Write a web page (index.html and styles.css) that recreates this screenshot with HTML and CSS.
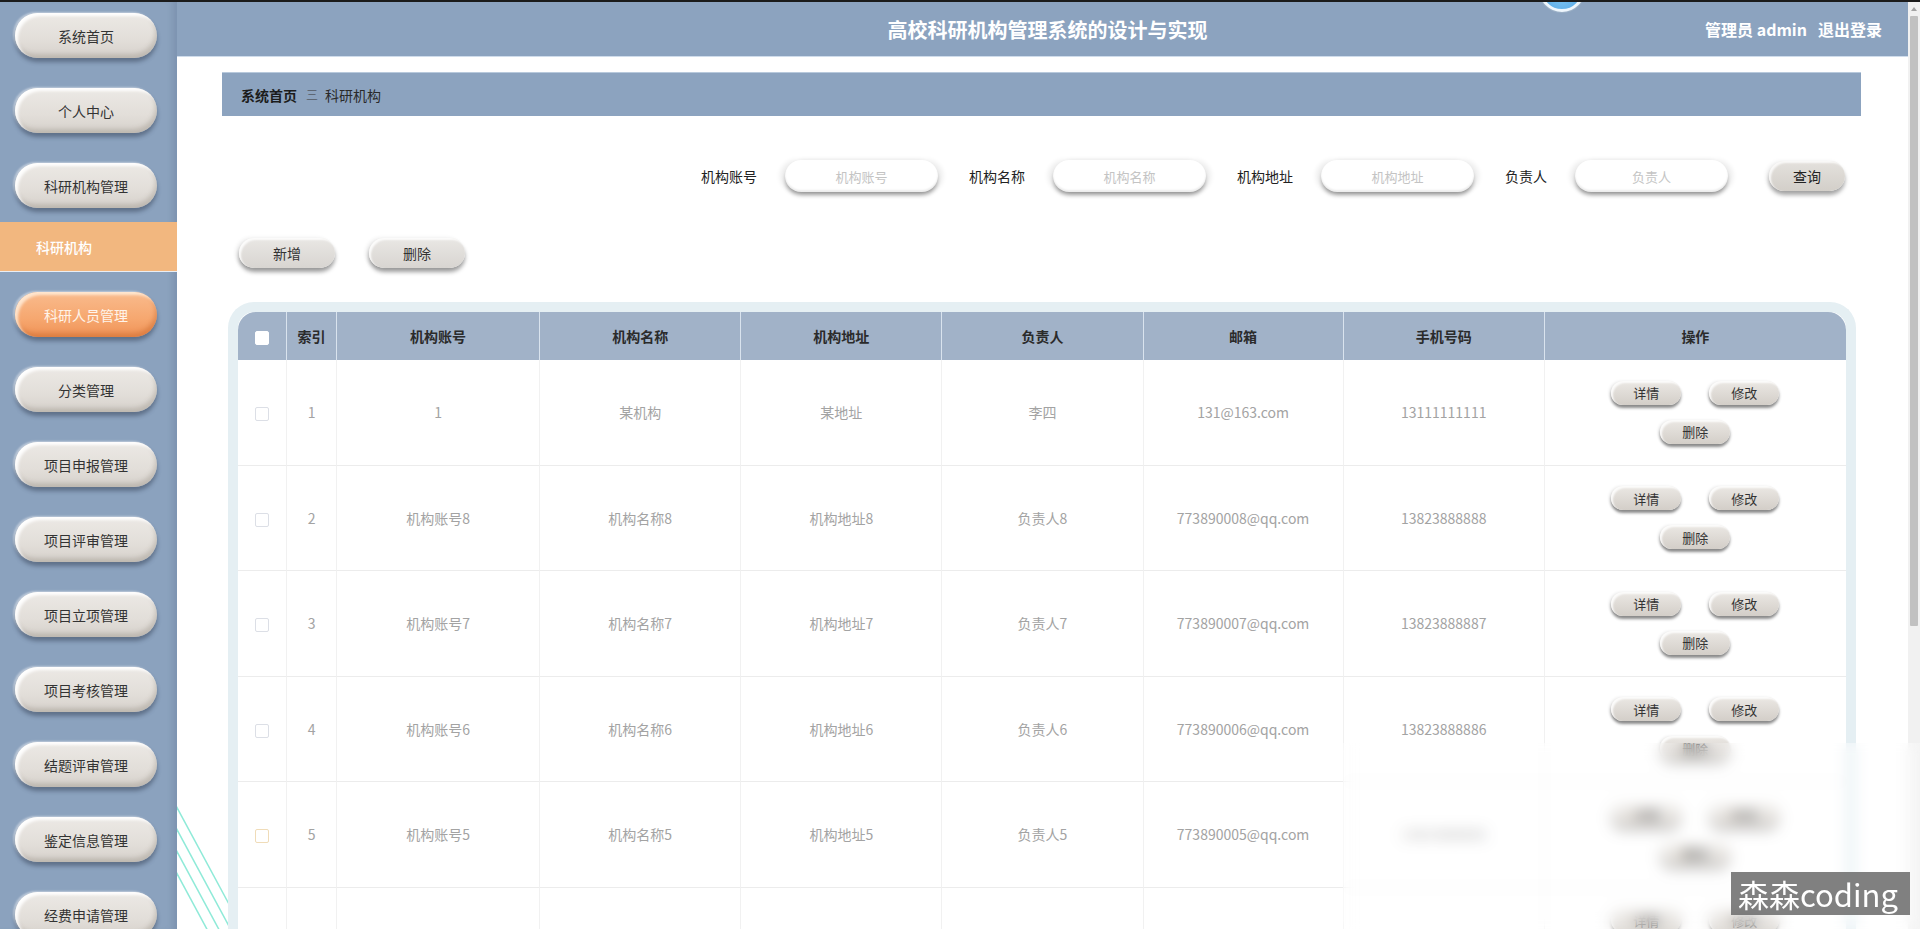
FILE: index.html
```html
<!DOCTYPE html>
<html lang="zh-CN">
<head>
<meta charset="utf-8">
<title>高校科研机构管理系统的设计与实现</title>
<link rel="stylesheet" href="styles.css">
</head>
<body>
<div class="app">
  <aside class="sidebar">
    <div class="nav-btn">系统首页</div>
    <div class="nav-btn">个人中心</div>
    <div class="nav-btn">科研机构管理</div>
    <div class="nav-sub">科研机构</div>
    <div class="nav-btn hover">科研人员管理</div>
    <div class="nav-btn">分类管理</div>
    <div class="nav-btn">项目申报管理</div>
    <div class="nav-btn">项目评审管理</div>
    <div class="nav-btn">项目立项管理</div>
    <div class="nav-btn">项目考核管理</div>
    <div class="nav-btn">结题评审管理</div>
    <div class="nav-btn">鉴定信息管理</div>
    <div class="nav-btn">经费申请管理</div>
  </aside>

  <div class="main">
    <header class="topbar">
      <div class="avatar"></div>
      <div class="tb-left"></div>
      <h1 class="title">高校科研机构管理系统的设计与实现</h1>
      <div class="user"><span>管理员 admin</span><span class="logout">退出登录</span></div>
    </header>

    <svg class="deco" width="60" height="180" viewBox="0 0 60 180">
      <line x1="-10" y1="40" x2="60" y2="170" />
      <line x1="-10" y1="62" x2="60" y2="192" />
      <line x1="-10" y1="84" x2="60" y2="214" />
      <line x1="-10" y1="106" x2="60" y2="236" />
    </svg>

    <div class="content">
      <div class="breadcrumb">
        <span class="bc-home">系统首页</span><span class="bc-sep">三</span><span class="bc-cur">科研机构</span>
      </div>

      <div class="search">
        <span class="s-label">机构账号</span><div class="s-input">机构账号</div>
        <span class="s-label">机构名称</span><div class="s-input">机构名称</div>
        <span class="s-label">机构地址</span><div class="s-input">机构地址</div>
        <span class="s-label">负责人</span><div class="s-input last">负责人</div>
        <div class="btn-query">查询</div>
      </div>

      <div class="actions">
        <div class="act-btn">新增</div>
        <div class="act-btn">删除</div>
      </div>

      <div class="table-box">
        <table class="grid">
          <colgroup>
            <col class="c-chk"><col class="c-idx"><col class="c-a"><col class="c-b"><col class="c-b"><col class="c-b"><col class="c-c"><col class="c-b"><col class="c-op">
          </colgroup>
          <thead>
            <tr>
              <th><span class="chk head"></span></th>
              <th>索引</th>
              <th>机构账号</th>
              <th>机构名称</th>
              <th>机构地址</th>
              <th>负责人</th>
              <th>邮箱</th>
              <th>手机号码</th>
              <th>操作</th>
            </tr>
          </thead>
          <tbody>
            <tr>
              <td><span class="chk"></span></td><td>1</td><td>1</td><td>某机构</td><td>某地址</td><td>李四</td><td>131@163.com</td><td>13111111111</td>
              <td><div class="ops"><span class="op">详情</span><span class="op">修改</span><span class="op">删除</span></div></td>
            </tr>
            <tr>
              <td><span class="chk"></span></td><td>2</td><td>机构账号8</td><td>机构名称8</td><td>机构地址8</td><td>负责人8</td><td>773890008@qq.com</td><td>13823888888</td>
              <td><div class="ops"><span class="op">详情</span><span class="op">修改</span><span class="op">删除</span></div></td>
            </tr>
            <tr>
              <td><span class="chk"></span></td><td>3</td><td>机构账号7</td><td>机构名称7</td><td>机构地址7</td><td>负责人7</td><td>773890007@qq.com</td><td>13823888887</td>
              <td><div class="ops"><span class="op">详情</span><span class="op">修改</span><span class="op">删除</span></div></td>
            </tr>
            <tr>
              <td><span class="chk"></span></td><td>4</td><td>机构账号6</td><td>机构名称6</td><td>机构地址6</td><td>负责人6</td><td>773890006@qq.com</td><td>13823888886</td>
              <td><div class="ops"><span class="op">详情</span><span class="op">修改</span><span class="op">删除</span></div></td>
            </tr>
            <tr>
              <td><span class="chk warm"></span></td><td>5</td><td>机构账号5</td><td>机构名称5</td><td>机构地址5</td><td>负责人5</td><td>773890005@qq.com</td><td>13823888885</td>
              <td><div class="ops"><span class="op">详情</span><span class="op">修改</span><span class="op">删除</span></div></td>
            </tr>
            <tr class="row-partial">
              <td><span class="chk"></span></td><td></td><td></td><td></td><td></td><td></td><td></td><td></td>
              <td><div class="ops"><span class="op">详情</span><span class="op">修改</span><span class="op">删除</span></div></td>
            </tr>
          </tbody>
        </table>
      </div>
    </div>
  </div>

  <div class="scrollbar">
    <div class="sb-arrow"></div>
    <div class="sb-thumb"></div>
  </div>
</div>

<div class="blur-patch"></div>
<div class="watermark">森森coding</div>
</body>
</html>
```

FILE: styles.css
```css
* { box-sizing: border-box; }

html, body {
  margin: 0;
  height: 100%;
  overflow: hidden;
}

body {
  font-family: "Noto Sans CJK SC", "Noto Sans", sans-serif;
  color: #333;
  background: #fff;
}

.app {
  display: flex;
  height: 929px;
  border-top: 2px solid #1b1b1b;
}

/* ---------- sidebar ---------- */
.sidebar {
  width: 177px;
  flex: none;
  background: #8ba2be;
  box-shadow: inset -8px 0 6px -4px rgba(60, 80, 110, 0.18);
  display: flex;
  flex-direction: column;
  padding-top: 11px;
  overflow: hidden;
}

.nav-btn {
  flex: none;
  width: 142px;
  height: 45px;
  margin: 0 0 30px 15px;
  border-radius: 23px;
  display: flex;
  align-items: center;
  justify-content: center;
  font-size: 14px;
  color: #333;
  background: linear-gradient(180deg, #ece9e5 0%, #e2ded9 60%, #d6d1cb 100%);
  box-shadow:
    inset 3px 3px 3px rgba(255, 255, 255, 0.95),
    inset -2px -4px 4px rgba(120, 110, 100, 0.25),
    0 4px 4px rgba(40, 50, 70, 0.45),
    -2px -1px 2px rgba(255, 255, 255, 0.45);
}

.nav-btn.hover {
  color: #fff4ea;
  background: linear-gradient(180deg, #f9bb8d 0%, #f6a76f 60%, #ef9256 100%);
  box-shadow:
    inset 3px 3px 3px rgba(255, 235, 215, 0.9),
    inset -2px -4px 4px rgba(190, 90, 30, 0.35),
    0 4px 4px rgba(40, 50, 70, 0.45),
    -2px -1px 2px rgba(255, 255, 255, 0.45);
}

.nav-sub {
  flex: none;
  height: 50px;
  margin: -16px 0 20px 0;
  padding-left: 36px;
  display: flex;
  align-items: center;
  background: #f2b77f;
  color: #fff;
  font-size: 14px;
  font-weight: 500;
  border-bottom: 1px solid #e9eef4;
}

/* ---------- main ---------- */
.main {
  flex: 1;
  position: relative;
  display: flex;
  flex-direction: column;
  overflow: hidden;
  background: #fff;
}

.topbar {
  position: relative;
  flex: none;
  height: 55px;
  background: #8ca3bf;
  border-bottom: 1px solid #cfdceb;
  display: grid;
  grid-template-columns: 1fr auto 1fr;
  align-items: center;
}

.avatar {
  position: absolute;
  left: 1362px;
  top: -36px;
  width: 46px;
  height: 46px;
  border-radius: 50%;
  background: radial-gradient(circle at 50% 70%, #7cc3f2, #3f97dc);
  border: 3px solid #eef6fc;
  box-shadow: 0 0 0 1px #9bb0c6;
}

.title {
  margin: 0;
  font-size: 20px;
  font-weight: 700;
  color: #fff;
  padding-left: 10px;
}

.user {
  justify-self: end;
  margin-right: 26px;
  color: #fff;
  font-size: 16px;
  font-weight: 700;
}

.logout {
  margin-left: 11px;
}

.deco {
  position: absolute;
  left: 0;
  bottom: 0;
  z-index: 0;
}

.deco line {
  stroke: #8fead8;
  stroke-width: 1.5;
}

.content {
  position: relative;
  z-index: 1;
  flex: 1;
  padding: 15px 47px 0 45px;
}

.breadcrumb {
  height: 44px;
  background: #8ca3bf;
  border-top: 1px solid #b8c9dc;
  display: flex;
  align-items: center;
  padding-left: 19px;
  font-size: 14px;
}

.bc-home {
  font-weight: 700;
  color: #1c1c1c;
}

.bc-sep {
  margin: 0 7px 0 9px;
  color: #3a3a3a;
  font-size: 12px;
  font-weight: 300;
}

.bc-cur {
  color: #2a2a2a;
}

/* search */
.search {
  margin-top: 43px;
  height: 34px;
  display: flex;
  justify-content: flex-end;
  align-items: center;
  padding-right: 16px;
}

.s-label {
  font-size: 14px;
  color: #222;
  margin-right: 28px;
}

.s-input {
  width: 153px;
  height: 32px;
  margin-right: 31px;
  border-radius: 16px;
  background: #fff;
  display: flex;
  align-items: center;
  justify-content: center;
  font-size: 13px;
  color: #c4c4c4;
  box-shadow:
    0 4px 4px -1px rgba(0, 0, 0, 0.38),
    -5px 0 5px rgba(0, 0, 0, 0.07),
    5px 0 5px rgba(0, 0, 0, 0.07),
    inset 0 -2px 2px rgba(0, 0, 0, 0.08);
}

.s-input.last {
  margin-right: 41px;
}

.btn-query {
  width: 76px;
  height: 30px;
  border-radius: 15px;
  display: flex;
  align-items: center;
  justify-content: center;
  font-size: 14px;
  color: #222;
  background: linear-gradient(180deg, #e4e1dd 0%, #d3cfc9 100%);
  box-shadow:
    inset 2px 2px 2px rgba(255, 255, 255, 0.8),
    0 4px 4px rgba(0, 0, 0, 0.35),
    -3px 0 4px rgba(0, 0, 0, 0.06);
}

/* actions */
.actions {
  margin-top: 45px;
  padding-left: 17px;
  display: flex;
  gap: 34px;
}

.act-btn {
  width: 96px;
  height: 30px;
  border-radius: 15px;
  display: flex;
  align-items: center;
  justify-content: center;
  font-size: 14px;
  color: #333;
  background: linear-gradient(180deg, #e9e7e4 0%, #d8d5d1 100%);
  box-shadow:
    inset 2px 2px 2px rgba(255, 255, 255, 0.85),
    0 4px 4px rgba(0, 0, 0, 0.38),
    -3px 0 4px rgba(0, 0, 0, 0.08);
}

/* table */
.table-box {
  margin: 34px 5px 0 6px;
  border: 10px solid #e5eff3;
  border-bottom: none;
  border-radius: 26px 26px 0 0;
  background: #fff;
}

.grid {
  width: 100%;
  border-collapse: separate;
  border-spacing: 0;
  table-layout: fixed;
}

.c-chk { width: 49px; }
.c-idx { width: 50px; }
.c-a { width: 203px; }
.c-b { width: 201px; }
.c-c { width: 200px; }
.c-op { width: 301px; }

.grid th {
  height: 48px;
  background: #a1b2c8;
  color: #2b2b2b;
  font-size: 14px;
  font-weight: 700;
  border-right: 1px solid #d9e3ee;
  text-align: center;
}

.grid th:first-child { border-top-left-radius: 18px; }
.grid th:last-child { border-top-right-radius: 18px; border-right: none; }

.grid td {
  height: 105.5px;
  text-align: center;
  font-size: 14px;
  color: #a3a3a3;
  border-right: 1px solid #f1f1f1;
  border-bottom: 1px solid #ececec;
  padding: 0 10px;
}

.grid td:first-child,
.grid td:nth-child(2) { padding: 0; }
.grid td:last-child { border-right: none; }

.chk {
  display: inline-block;
  width: 14px;
  height: 14px;
  border: 1px solid #dcdfe6;
  border-radius: 2px;
  background: #fff;
  vertical-align: middle;
}

.chk.head {
  border-color: #fff;
}

.chk.warm {
  border-color: #f0dcb8;
}

.ops {
  display: flex;
  flex-wrap: wrap;
  justify-content: center;
}

.op {
  width: 70px;
  height: 24px;
  margin: 7.5px 14px;
  border-radius: 12px;
  display: flex;
  align-items: center;
  justify-content: center;
  font-size: 13px;
  color: #333;
  background: linear-gradient(180deg, #ebe8e4 0%, #d3cec8 100%);
  box-shadow:
    inset 2px 2px 2px rgba(255, 255, 255, 0.85),
    0 3px 3px rgba(0, 0, 0, 0.45),
    -2px 0 3px rgba(0, 0, 0, 0.08);
}

/* scrollbar */
.scrollbar {
  width: 12px;
  flex: none;
  background: #f1f1f1;
  position: relative;
}

.sb-arrow {
  width: 0;
  height: 0;
  margin: 5px auto 0;
  border-left: 3px solid transparent;
  border-right: 3px solid transparent;
  border-bottom: 4px solid #a3a3a3;
}

.sb-thumb {
  margin: 5px 2px 0;
  height: 610px;
  background: #c1c1c1;
  border-radius: 1px;
}

/* overlays (video artefacts) */
.blur-patch {
  position: absolute;
  left: 1343px;
  top: 743px;
  width: 577px;
  height: 186px;
  backdrop-filter: blur(7px);
  -webkit-backdrop-filter: blur(7px);
  background: rgba(255, 255, 255, 0.25);
  z-index: 5;
}

.watermark {
  position: absolute;
  left: 1731px;
  top: 872px;
  width: 179px;
  height: 43px;
  background: rgba(110, 110, 110, 0.88);
  color: #fff;
  font-size: 31px;
  line-height: 43px;
  padding-left: 7px;
  z-index: 6;
  white-space: nowrap;
  overflow: hidden;
}
```
